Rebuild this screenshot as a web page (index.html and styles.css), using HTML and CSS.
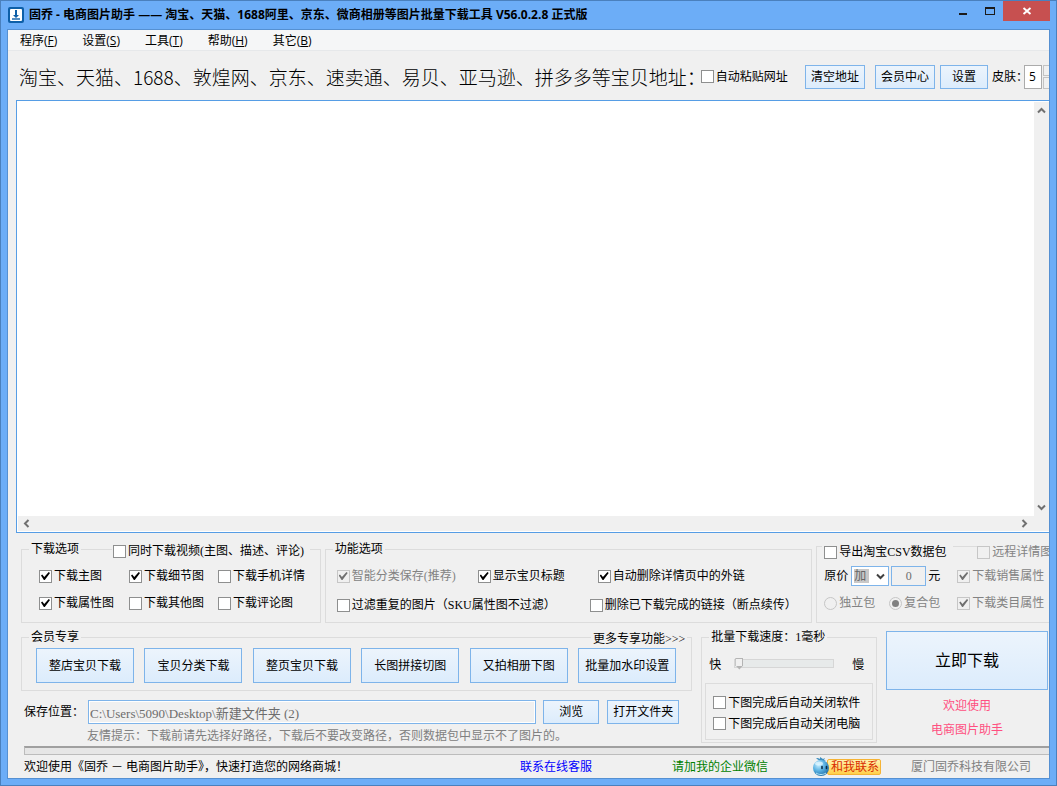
FILE: index.html
```html
<!DOCTYPE html>
<html lang="zh-CN">
<head>
<meta charset="utf-8">
<title>固乔 - 电商图片助手</title>
<link rel="stylesheet" href="styles.css">
</head>
<body>
<div class="window">
  <header class="titlebar">
    <svg class="app-icon" width="16" height="16" viewBox="0 0 16 16">
      <rect width="16" height="16" rx="2" fill="#0d5fa8"/>
      <rect x="2" y="2" width="12" height="12" rx="1" fill="#fff"/>
      <path d="M7 3h2v5h2l-3 3-3-3h2z" fill="#0d5fa8"/>
      <path d="M4 12h8" stroke="#0d5fa8" stroke-width="1.4"/>
    </svg>
    <h1 class="caption">固乔 - 电商图片助手 —— 淘宝、天猫、1688阿里、京东、微商相册等图片批量下载工具 V56.0.2.8 正式版</h1>
    <div class="window-buttons">
      <button class="wbtn" aria-label="最小化"><svg width="10" height="10"><rect x="1" y="7" width="8" height="2" fill="#1b1b1b"/></svg></button>
      <button class="wbtn" aria-label="最大化"><svg width="10" height="10"><path d="M0 1h10v8H0z" fill="#1b1b1b"/><path d="M1 3h8v5H1z" fill="#6cadf7"/></svg></button>
      <button class="wbtn wbtn-close" aria-label="关闭"><svg width="10" height="10"><path d="M1.500 2l7 6M8.500 2l-7 6" stroke="#fff" stroke-width="1.900"/></svg></button>
    </div>
  </header>

  <main class="client">
    <nav class="menu">
      <button>程序(<u>F</u>)</button>
      <button>设置(<u>S</u>)</button>
      <button>工具(<u>T</u>)</button>
      <button>帮助(<u>H</u>)</button>
      <button>其它(<u>B</u>)</button>
    </nav>

    <div class="toolbar">
      <label class="address-label" for="addresses">淘宝、天猫、1688、敦煌网、京东、速卖通、易贝、亚马逊、拼多多等宝贝地址：</label>
      <label class="check"><input type="checkbox">自动粘贴网址</label>
      <div class="toolbar-actions">
        <button class="btn btn-wide">清空地址</button>
        <button class="btn btn-wide btn-member">会员中心</button>
        <button class="btn btn-set">设置</button>
        <label class="skin-label" for="skin">皮肤：</label>
        <input class="skin" id="skin" type="text" value="5">
        <span class="spin"><i></i><i></i></span>
      </div>
    </div>

    <div class="editor">
      <textarea id="addresses"></textarea>
      <div class="vscroll">
        <svg width="9" height="7" viewBox="0 0 9 7"><path d="M1 5.500l3.500-3.500L8 5.500" class="chev"/></svg>
        <svg width="9" height="7" viewBox="0 0 9 7"><path d="M1 1.500L4.500 5L8 1.500" class="chev"/></svg>
      </div>
      <div class="hscroll">
        <svg width="7" height="9" viewBox="0 0 7 9"><path d="M5.500 1L2 4.500L5.500 8" class="chev"/></svg>
        <svg width="7" height="9" viewBox="0 0 7 9"><path d="M1.500 1L5 4.500L1.500 8" class="chev"/></svg>
      </div>
    </div>

    <div class="options">
      <fieldset class="group download">
        <legend>下载选项</legend>
        <label class="check video"><input type="checkbox">同时下载视频(主图、描述、评论)</label>
        <label class="check"><input type="checkbox" checked>下载主图</label>
        <label class="check"><input type="checkbox" checked>下载细节图</label>
        <label class="check"><input type="checkbox">下载手机详情</label>
        <label class="check"><input type="checkbox" checked>下载属性图</label>
        <label class="check"><input type="checkbox">下载其他图</label>
        <label class="check"><input type="checkbox">下载评论图</label>
      </fieldset>

      <fieldset class="group features">
        <legend>功能选项</legend>
        <div class="feature-row feature-row-three">
          <label class="check off"><input type="checkbox" checked disabled>智能分类保存(推荐)</label>
          <label class="check"><input type="checkbox" checked>显示宝贝标题</label>
          <label class="check"><input type="checkbox" checked>自动删除详情页中的外链</label>
        </div>
        <div class="feature-row feature-row-two">
          <label class="check"><input type="checkbox">过滤重复的图片（SKU属性图不过滤）</label>
          <label class="check"><input type="checkbox">删除已下载完成的链接（断点续传）</label>
        </div>
      </fieldset>

      <fieldset class="group export" aria-label="数据包">
        <label class="check csv"><input type="checkbox">导出淘宝CSV数据包</label>
        <label class="check off remote"><input type="checkbox" disabled>远程详情图</label>
        <div class="price">
          <label for="op">原价</label>
          <span class="select-box">
            <select id="op"><option>加</option></select>
            <svg width="9" height="7" viewBox="0 0 9 7"><path d="M1 1.500L4.500 5L8 1.500" class="chev"/></svg>
          </span>
          <input id="amount" type="text" value="0" disabled>
          <label for="amount">元</label>
        </div>
        <label class="check off"><input type="checkbox" checked disabled>下载销售属性</label>
        <div class="packs">
          <label class="check off"><input type="radio" name="pack" disabled>独立包</label>
          <label class="check off"><input type="radio" name="pack" checked disabled>复合包</label>
        </div>
        <label class="check off"><input type="checkbox" checked disabled>下载类目属性</label>
      </fieldset>
    </div>

    <div class="actions">
      <div class="left">
        <fieldset class="group member">
          <legend>会员专享</legend>
          <a class="more" href="#">更多专享功能&gt;&gt;&gt;</a>
          <button class="btn">整店宝贝下载</button>
          <button class="btn">宝贝分类下载</button>
          <button class="btn">整页宝贝下载</button>
          <button class="btn">长图拼接切图</button>
          <button class="btn">又拍相册下图</button>
          <button class="btn">批量加水印设置</button>
        </fieldset>
        <div class="save">
          <label for="path">保存位置：</label>
          <input id="path" type="text" readonly value="C:\Users\5090\Desktop\新建文件夹 (2)">
          <button class="btn browse">浏览</button>
          <button class="btn open">打开文件夹</button>
        </div>
        <p class="hint">友情提示：下载前请先选择好路径，下载后不要改变路径，否则数据包中显示不了图片的。</p>
      </div>

      <fieldset class="group speed">
        <legend>批量下载速度：1毫秒</legend>
        <div class="slider-row">
          <label for="speed">快</label>
          <input id="speed" type="range" min="1" max="100" value="1">
          <span>慢</span>
        </div>
        <div class="group finish">
          <label class="check"><input type="checkbox">下图完成后自动关闭软件</label>
          <label class="check"><input type="checkbox">下图完成后自动关闭电脑</label>
        </div>
      </fieldset>

      <div class="go">
        <button class="btn start">立即下载</button>
        <p class="welcome">欢迎使用</p>
        <p class="welcome">电商图片助手</p>
      </div>
    </div>

    <div class="progress" role="progressbar" aria-label="进度"></div>

    <footer class="status">
      <span class="slogan">欢迎使用《固乔 － 电商图片助手》，快速打造您的网络商城！</span>
      <a class="service" href="#">联系在线客服</a>
      <a class="wechat" href="#">请加我的企业微信</a>
      <a class="contact" href="#">
        <svg width="20" height="19" viewBox="0 0 20 19">
          <defs><radialGradient id="drop" cx=".35" cy=".3" r=".75"><stop offset="0" stop-color="#c8efff"/><stop offset=".5" stop-color="#5bb2e2"/><stop offset="1" stop-color="#1f6da6"/></radialGradient></defs>
          <path d="M9 4C7 3 6 3 4 1c2 0 3 0 4 1L8 0l3 2 2-1-1 2 2 1z" fill="#3f8fc0"/>
          <circle cx="9" cy="11" r="8" fill="url(#drop)"/>
          <ellipse cx="7" cy="6.500" rx="4" ry="2" fill="#e6f8ff" opacity=".7"/>
          <path d="M10 9.500v2M14.500 9.500v2" stroke="#082c48" stroke-width="1.600" stroke-linecap="round"/>
          <path d="M4 16c3 2 7 2 10 0" stroke="#b7e8f8" fill="none"/>
        </svg>
        <span>和我联系</span>
      </a>
      <span class="company">厦门固乔科技有限公司</span>
    </footer>
  </main>
</div>
</body>
</html>
```

FILE: styles.css
```css
* { box-sizing: border-box; }

body {
  margin: 0;
  font: 12px/16px "Liberation Serif", "Noto Sans CJK SC", sans-serif;
  color: #000;
}

button, input, select, textarea { font: inherit; color: inherit; margin: 0; }
a { text-decoration: none; color: inherit; }
p, h1 { margin: 0; }

.window {
  display: flex;
  flex-direction: column;
  height: 100vh;
  min-height: 600px;
  padding: 0 6px 6px;
  border: 1px solid #4a80bd;
  background: #6cadf7;
}

/* title bar */
.titlebar { display: flex; align-items: flex-start; height: 28px; flex: none; }
.app-icon { margin: 6px 5px 0 1px; flex: none; }
.caption {
  flex: 1;
  margin-top: 5px;
  font: 700 12px/18px "Open Sans", "Noto Sans CJK SC", sans-serif;
  white-space: nowrap;
  overflow: hidden;
}
.window-buttons { display: flex; }
.wbtn { width: 27px; height: 20px; padding: 0; border: 0; background: none; display: grid; place-items: center; }
.wbtn-close { width: 47px; background: #c75050; }

.client {
  flex: 1;
  min-height: 0;
  display: flex;
  flex-direction: column;
  border: 1px solid #5590d2;
  background: #f0f0f0;
  overflow: hidden;
}

/* menu */
.menu {
  display: flex;
  gap: 25px;
  height: 21px;
  flex: none;
  padding: 2px 0 0 12px;
  background: #f5f6f7;
  border-bottom: 1px solid #e6e8ea;
  font: 12px/18px "Open Sans", "Noto Sans CJK SC", sans-serif;
}
.menu button { border: 0; padding: 0; background: none; }

/* buttons and tick boxes */
.btn {
  padding: 0;
  border: 1px solid #7eb4ea;
  background: linear-gradient(#ecf4fc, #dcecfc);
  white-space: nowrap;
}
.check { display: flex; align-items: center; gap: 2px; white-space: nowrap; }
.check input {
  appearance: none;
  flex: none;
  width: 13px;
  height: 13px;
  border: 1px solid #8e8f8f;
  background: #fff;
}
.check input:checked {
  display: grid;
  place-items: center;
}
.check input[type="checkbox"]:checked::before {
  content: "";
  width: 9px;
  height: 8px;
  background: #000;
  clip-path: polygon(0 45%, 14% 32%, 36% 62%, 86% 0, 100% 14%, 42% 100%, 32% 100%);
}
.off { color: #838383; }
.check.off input { border-color: #c6c6c6; background: #f0f0f0; }
.check.off input[type="checkbox"]:checked::before { background: #707070; }
.check input[type="radio"] { border-radius: 50%; }
.check input[type="radio"]:checked::before {
  content: "";
  width: 7px;
  height: 7px;
  border-radius: 50%;
  background: #808080;
}

/* toolbar */
.toolbar { display: flex; align-items: center; height: 49px; flex: none; padding: 2px 0 0 11px; }
.address-label {
  font: 300 19px/24px "Noto Sans CJK SC", sans-serif;
  white-space: nowrap;
  margin-right: -5px;
}
.toolbar-actions { display: flex; align-items: center; margin-left: auto; height: 24px; flex: none; }
.toolbar .btn { height: 24px; }
.btn-wide { width: 60px; }
.btn-member { margin: 0 5px 0 10px; }
.btn-set { width: 48px; }
.skin-label { width: 32px; margin-left: 4px; white-space: nowrap; }
.skin { width: 18px; height: 24px; padding: 0 0 0 4px; border: 1px solid #ababab; background: #fff; font-family: "Open Sans", sans-serif; }
.spin { display: grid; gap: 1px; width: 6px; height: 24px; margin-left: 1px; }
.spin i { border: 1px solid #c3c3c3; border-right: 0; }

/* address box */
.editor {
  flex: 1;
  min-height: 0;
  display: grid;
  grid-template: 1fr 15px / 1fr 15px;
  margin-left: 8px;
  padding: 1px 0 1px 1px;
  border: 1px solid #569de5;
  border-right: 0;
  background: #fff;
}
.editor textarea { border: 0; padding: 2px; resize: none; outline: 0; background: #fff; min-height: 0; }
.vscroll, .hscroll { display: flex; justify-content: space-between; align-items: center; background: #f0f0f0; }
.vscroll { flex-direction: column; padding: 5px 0; }
.hscroll { grid-column: 1 / -1; padding: 0 21px 0 5px; }
.chev { fill: none; stroke: #707070; stroke-width: 2; }

/* option groups */
.group { position: relative; min-width: 0; margin: 0; padding: 0; border: 1px solid #dcdcdc; }
.group legend { position: absolute; top: -9px; left: 7px; padding: 0 2px; background: #f0f0f0; }
.options {
  display: grid;
  grid-template-columns: 300fr 488fr 233fr;
  gap: 4px;
  height: 74px;
  flex: none;
  margin: 16px 0 0 13px;
}
.download {
  display: grid;
  grid-template-columns: 90px 89px auto;
  align-content: start;
  row-gap: 11px;
  padding: 18px 0 0 17px;
}
.video { position: absolute; top: -7px; left: 90px; padding: 0 6px 0 1px; background: #f0f0f0; }
.features { padding: 18px 0 0 11px; }
.feature-row { display: grid; }
.feature-row-three { grid-template-columns: 141px 120px auto; margin-bottom: 13px; }
.feature-row-two { grid-template-columns: 253px auto; }
.export {
  display: grid;
  grid-template-columns: 133px auto;
  align-content: start;
  align-items: center;
  row-gap: 9px;
  margin-top: -3px;
  padding: 19px 0 0 7px;
  border-right: 0;
}
.csv, .remote { position: absolute; top: -3px; background: #f0f0f0; }
.csv { left: 5px; padding: 0 6px 0 2px; }
.remote { left: 160px; }
.price { display: flex; align-items: center; white-space: nowrap; }
.price input {
  width: 35px;
  height: 20px;
  margin: 0 2px;
  padding: 0;
  border: 1px solid #7eb4ea;
  background: #f0f0f0;
  color: #6d6d6d;
  text-align: center;
}
.select-box { position: relative; display: flex; margin-left: 3px; }
.select-box select {
  appearance: none;
  width: 38px;
  height: 20px;
  padding: 0 18px 0 2px;
  border: 1px solid #7eb4ea;
  border-radius: 0;
  background: linear-gradient(#c8c8c8, #c8c8c8) 2px 2px / 15px 14px no-repeat #fff;
  color: #666;
}
.select-box svg { position: absolute; right: 4px; top: 7px; pointer-events: none; }
.select-box .chev { stroke: #404040; }
.packs { display: grid; grid-template-columns: 65px auto; }

/* lower area */
.actions {
  display: grid;
  grid-template-columns: 672fr 176fr 162fr;
  gap: 9px;
  flex: none;
  margin: 8px 1px 0 13px;
}
.left { padding-top: 6px; }
.member { display: flex; justify-content: space-between; height: 54px; padding: 10px 15px 8px 14px; }
.member .btn { width: 98px; height: 35px; }
.more { position: absolute; top: -7px; right: 4px; padding: 0 2px; background: #f0f0f0; }
.save { display: flex; align-items: center; height: 24px; margin: 9px 13px 0 3px; }
.save label { width: 64px; white-space: nowrap; }
.save input {
  flex: 1;
  min-width: 0;
  height: 24px;
  padding: 0 1px;
  border: 1px solid #7eb4ea;
  outline: 1px solid #fff;
  outline-offset: -2px;
  background: #f0f0f0;
  color: #6d6d6d;
  font-size: 13px;
}
.save .btn { height: 24px; }
.browse { width: 56px; margin: 0 8px 0 7px; }
.open { width: 72px; }
.hint { margin: 4px 0 0 66px; color: #808080; white-space: nowrap; }
.speed { margin-top: 6px; height: 106px; padding: 19px 3px 3px; }
.slider-row { display: flex; align-items: flex-start; padding: 0 9px 0 4px; }
.slider-row input { appearance: none; width: 100px; height: 12px; margin: 0 auto 0 13px; background: none; }
.slider-row input::-webkit-slider-runnable-track { height: 9px; border: 1px solid #d6d6d6; background: #e7eaea; }
.slider-row input::-webkit-slider-thumb {
  appearance: none;
  width: 8px;
  height: 12px;
  margin-top: -2px;
  background: linear-gradient(#f0f0f0, #f0f0f0) 1px 1px / 6px 7px no-repeat #b4b4b4;
  clip-path: polygon(0 0, 100% 0, 100% 65%, 50% 100%, 0 65%);
}
.finish { display: grid; align-content: center; row-gap: 5px; height: 57px; margin-top: 10px; padding: 3px 0 0 7px; }
.go { text-align: center; }
.start { width: 100%; height: 59px; font-size: 16px; margin-bottom: 8px; }
.welcome { color: #ff4f81; margin-bottom: 8px; }

.progress {
  height: 9px;
  flex: none;
  margin-left: 16px;
  border: 1px solid #bcbcbc;
  border-top: 2px solid #a0a0a0;
  border-right: 0;
  background: #e6e6e6;
}

/* status line */
.status { display: flex; align-items: center; height: 23px; flex: none; padding: 0 18px 0 16px; white-space: nowrap; }
.slogan { flex: 496; }
.service { flex: 152; color: #0000ff; }
.wechat { flex: 140; color: #008000; }
.contact { display: flex; align-items: center; flex: 99; color: #d92b00; }
.contact svg { position: relative; z-index: 1; flex: none; }
.contact span {
  margin-left: -5px;
  padding: 0 1px 0 3px;
  border: 1px solid #f5b335;
  border-radius: 2px;
  background: linear-gradient(#fff3b0, #ffd04a);
  line-height: 14px;
}
.company { color: #808080; }
.slogan, .service, .wechat, .contact { min-width: 0; flex-basis: 0; }
```
